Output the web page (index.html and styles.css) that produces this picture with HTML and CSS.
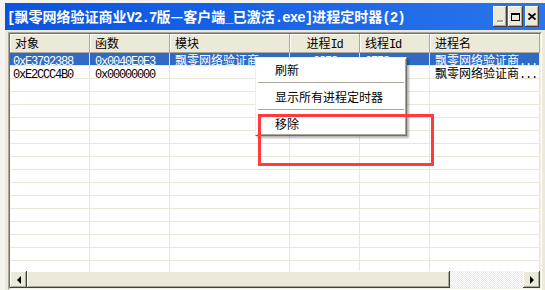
FILE: index.html
```html
<!DOCTYPE html>
<html>
<head>
    <title>进程定时器</title>
    <meta charset="UTF-8">
    <link rel="stylesheet" href="styles.css">
</head>
<body>
    <div class="desk">
        <div class="window">
            <div class="titlebar">
                <span class="title"><span class="en">[</span>飘零网络验证商业<span class="en">V2.7</span>版—客户端<span class="en">_</span>已激活<span class="en">.exe]</span>进程定时器<span class="en">(2)</span></span>
                <div class="caption-btns">
                    <div class="cap-btn"><span class="min-glyph"></span></div>
                    <div class="cap-btn wide"><span class="max-glyph"></span></div>
                    <div class="cap-btn close">
                        <svg width="8" height="7" viewBox="0 0 8 7"><path d="M0.5 0.5L7.5 6.5M7.5 0.5L0.5 6.5" stroke="#000" stroke-width="1.8" fill="none"/></svg>
                    </div>
                </div>
            </div>

            <div class="client">
                <div class="listview">
                    <div class="lv-inner">
                        <div class="lv-header">
                            <div class="hcell">对象</div>
                            <div class="hcell">函数</div>
                            <div class="hcell">模块</div>
                            <div class="hcell center">进程<span class="en">Id</span></div>
                            <div class="hcell">线程<span class="en">Id</span></div>
                            <div class="hcell">进程名</div>
                        </div>

                        <div class="lv-rows">
                            <div class="row selected">
                                <div class="cell first"><span class="en">0xE3792388</span></div>
                                <div class="cell"><span class="en">0x0040E0E3</span></div>
                                <div class="cell">飘零网络验证商<span class="en">...</span></div>
                                <div class="cell center"><span class="en">2858</span></div>
                                <div class="cell"><span class="en">2758</span></div>
                                <div class="cell">飘零网络验证商<span class="en">...</span></div>
                            </div>
                            <div class="row">
                                <div class="cell first"><span class="en">0xE2CCC4B0</span></div>
                                <div class="cell"><span class="en">0x00000000</span></div>
                                <div class="cell"></div>
                                <div class="cell"></div>
                                <div class="cell"></div>
                                <div class="cell">飘零网络验证商<span class="en">...</span></div>
                            </div>
                            <div class="row"><div class="cell"></div><div class="cell"></div><div class="cell"></div><div class="cell"></div><div class="cell"></div><div class="cell"></div></div>
                            <div class="row"><div class="cell"></div><div class="cell"></div><div class="cell"></div><div class="cell"></div><div class="cell"></div><div class="cell"></div></div>
                            <div class="row"><div class="cell"></div><div class="cell"></div><div class="cell"></div><div class="cell"></div><div class="cell"></div><div class="cell"></div></div>
                            <div class="row"><div class="cell"></div><div class="cell"></div><div class="cell"></div><div class="cell"></div><div class="cell"></div><div class="cell"></div></div>
                            <div class="row"><div class="cell"></div><div class="cell"></div><div class="cell"></div><div class="cell"></div><div class="cell"></div><div class="cell"></div></div>
                            <div class="row"><div class="cell"></div><div class="cell"></div><div class="cell"></div><div class="cell"></div><div class="cell"></div><div class="cell"></div></div>
                            <div class="row"><div class="cell"></div><div class="cell"></div><div class="cell"></div><div class="cell"></div><div class="cell"></div><div class="cell"></div></div>
                            <div class="row"><div class="cell"></div><div class="cell"></div><div class="cell"></div><div class="cell"></div><div class="cell"></div><div class="cell"></div></div>
                            <div class="row"><div class="cell"></div><div class="cell"></div><div class="cell"></div><div class="cell"></div><div class="cell"></div><div class="cell"></div></div>
                            <div class="row"><div class="cell"></div><div class="cell"></div><div class="cell"></div><div class="cell"></div><div class="cell"></div><div class="cell"></div></div>
                            <div class="row"><div class="cell"></div><div class="cell"></div><div class="cell"></div><div class="cell"></div><div class="cell"></div><div class="cell"></div></div>
                            <div class="row"><div class="cell"></div><div class="cell"></div><div class="cell"></div><div class="cell"></div><div class="cell"></div><div class="cell"></div></div>
                            <div class="row"><div class="cell"></div><div class="cell"></div><div class="cell"></div><div class="cell"></div><div class="cell"></div><div class="cell"></div></div>
                            <div class="row"><div class="cell"></div><div class="cell"></div><div class="cell"></div><div class="cell"></div><div class="cell"></div><div class="cell"></div></div>
                            <div class="row"><div class="cell"></div><div class="cell"></div><div class="cell"></div><div class="cell"></div><div class="cell"></div><div class="cell"></div></div>
                        </div>

                        <div class="hscroll">
                            <div class="sb-btn"><span class="arrow-left"></span></div>
                            <div class="sb-thumb"></div>
                            <div class="sb-track"></div>
                            <div class="sb-btn"><span class="arrow-right"></span></div>
                        </div>
                    </div>
                </div>
            </div>
        </div>
    </div>

    <!-- menú contextual y marca roja -->
    <div class="menu">
        <div class="menu-item">刷新</div>
        <div class="menu-sep"></div>
        <div class="menu-item">显示所有进程定时器</div>
        <div class="menu-sep"></div>
        <div class="menu-item">移除</div>
    </div>
    <div class="mark"></div>
</body>
</html>
```

FILE: styles.css
```css
body {
    margin: 0;
    background-color: #f4f3ee;
    font-family: "Noto Sans CJK SC", sans-serif;
    font-size: 12px;
    color: #000;
}
.en {
    font-family: "Liberation Mono", monospace;
    font-size: 12px;
    letter-spacing: -1.2px;
}
.desk {
    padding: 3px 0 0 5px;
}
.window {
    width: 540px;
    height: 287px;
    background-color: #ece9d8;
    display: flex;
    flex-direction: column;
}
.titlebar {
    height: 27px;
    flex: none;
    display: flex;
    align-items: center;
    padding: 0 6px 0 2px;
    background: linear-gradient(90deg, #0a54e0, #2a74ec);
    color: #fff;
}
.title {
    font-weight: bold;
    font-size: 14px;
    line-height: 16px;
    white-space: nowrap;
}
.title .en {
    font-size: 14px;
    letter-spacing: -0.9px;
}
.caption-btns {
    margin-left: auto;
    display: flex;
    gap: 1px;
}
.cap-btn {
    width: 14px;
    height: 21px;
    box-sizing: border-box;
    background-color: #ece9d8;
    box-shadow: inset -1px -1px #404040, inset 1px 1px #fff, inset -2px -2px #aca899;
    display: flex;
    align-items: center;
    justify-content: center;
}
.cap-btn.wide {
    width: 15px;
}
.cap-btn.close {
    margin-left: 1px;
}
.min-glyph {
    width: 6px;
    height: 2px;
    margin-top: 9px;
    background-color: #aca899;
    box-shadow: 1px 1px #fff;
}
.max-glyph {
    width: 9px;
    height: 8px;
    box-sizing: border-box;
    border: 1px solid #000;
    border-top-width: 2px;
}
.client {
    flex: 1;
    padding: 2px 3px 0 3px;
}
.listview {
    height: 258px;
    box-sizing: border-box;
    border: 1px solid;
    border-color: #aca899 #fff #fff #aca899;
}
.lv-inner {
    height: 100%;
    box-sizing: border-box;
    border: 1px solid;
    border-color: #716f64 #f1efe2 #f1efe2 #716f64;
    background-color: #fff;
    display: flex;
    flex-direction: column;
}
.lv-header,
.row {
    display: grid;
    grid-template-columns: 80px 80px 120px 70px 70px 110px;
}
.lv-header {
    height: 19px;
    flex: none;
}
.hcell {
    box-sizing: border-box;
    height: 19px;
    padding: 0 5px 1px;
    line-height: 18px;
    background-color: #ece9d8;
    border-right: 1px solid #aca899;
    border-bottom: 1px solid #aca899;
    box-shadow: inset 1px 1px #fff;
    white-space: nowrap;
}
.center {
    text-align: center;
}
.lv-rows {
    flex: 1;
    overflow: hidden;
}
.row {
    height: 13px;
}
.cell {
    box-sizing: border-box;
    height: 13px;
    padding: 0 4px 0 5px;
    line-height: 13px;
    border-right: 1px solid #e9e7da;
    border-bottom: 1px solid #e9e7da;
    white-space: nowrap;
}
.cell.first {
    padding-left: 3px;
}
.row.selected {
    background-color: #316ac5;
    color: #fff;
}
.hscroll {
    height: 17px;
    flex: none;
    display: flex;
}
.sb-btn {
    width: 17px;
    height: 17px;
    box-sizing: border-box;
    background-color: #ece9d8;
    box-shadow: inset -1px -1px #404040, inset 1px 1px #fff, inset -2px -2px #aca899;
    display: flex;
    align-items: center;
    justify-content: center;
}
.arrow-left {
    border-right: 4px solid #000;
    border-top: 4px solid transparent;
    border-bottom: 4px solid transparent;
}
.arrow-right {
    border-left: 4px solid #000;
    border-top: 4px solid transparent;
    border-bottom: 4px solid transparent;
}
.sb-thumb {
    width: 423px;
    height: 17px;
    box-sizing: border-box;
    background-color: #ece9d8;
    box-shadow: inset -1px -1px #404040, inset 1px 1px #fff, inset -2px -2px #aca899;
}
.sb-track {
    flex: 1;
    background: repeating-conic-gradient(#fff 0 25%, #ece9d8 0 50%) 0 0 / 2px 2px;
}
.menu {
    position: absolute;
    left: 255px;
    top: 57px;
    width: 152px;
    box-sizing: border-box;
    padding: 1px;
    background-color: #fff;
    border: 1px solid;
    border-color: #f1efe2 #716f64 #716f64 #f1efe2;
    box-shadow: inset 1px 1px #fff, inset -1px -1px #aca899, 2px 2px 2px rgba(0, 0, 0, 0.3);
}
.menu-item {
    height: 21px;
    line-height: 21px;
    padding-left: 18px;
    white-space: nowrap;
}
.menu-sep {
    height: 6px;
    box-sizing: border-box;
    padding: 2px 1px 0;
}
.menu-sep::before {
    content: "";
    display: block;
    border-top: 1px solid #aca899;
    border-bottom: 1px solid #fff;
}
.mark {
    position: absolute;
    left: 258px;
    top: 114px;
    width: 176px;
    height: 52px;
    box-sizing: border-box;
    border: 3px solid #ff3b3b;
}
```
